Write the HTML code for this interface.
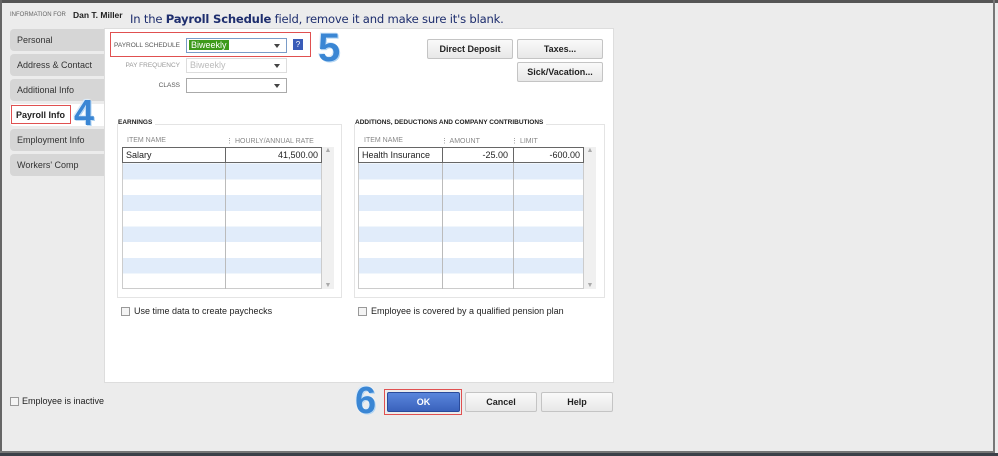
<!DOCTYPE html>
<html><head><style>
*{box-sizing:border-box;margin:0;padding:0}
body{width:998px;height:456px;background:#ececec;font-family:"Liberation Sans",Arial,sans-serif;font-size:9px;color:#222;position:relative;overflow:hidden}
.a{position:absolute;white-space:nowrap}
.tab{position:absolute;left:10px;width:94px;height:22px;background:#d6d6d6;border-radius:4px 0 0 4px;padding:6px 0 0 7px;font-size:9px;color:#333}
.btn{position:absolute;background:linear-gradient(#fafafa,#e8e8e8);border:1px solid #c4c4c4;border-radius:2px;text-align:center;font-size:9px;color:#222;line-height:18px}
.lbl{position:absolute;font-size:6.5px;color:#555;text-align:right;white-space:nowrap}
.sel{position:absolute;height:15px;border:1px solid #aaa;background:#fff}
.sel:after{content:"";position:absolute;right:6px;top:5px;border:3px solid transparent;border-top:4px solid #444}
.num{position:absolute;font-family:"Liberation Sans",sans-serif;font-weight:bold;color:#3a86d4;text-shadow:0 0 2px #fff,1px 1px 0 #9cc9f0,-1px -1px 0 #cde4f8}
.hd{position:absolute;font-size:7px;color:#888;white-space:nowrap}
.cb{position:absolute;width:9px;height:9px;border:1px solid #999;background:#f4f4f4}
</style></head><body>
<div class="a" style="left:0;top:0;width:998px;height:3px;background:#555"></div>
<div class="a" style="left:0;top:0;width:2px;height:456px;background:#666"></div>
<div class="a" style="left:993px;top:0;width:2px;height:452px;background:#777"></div>
<div class="a" style="left:0;top:451px;width:995px;height:2px;background:#777"></div>
<div class="a" style="left:0;top:453px;width:998px;height:3px;background:#3b4048"></div>

<div class="a" style="left:10px;top:12px;font-size:6px;color:#666">INFORMATION FOR</div>
<div class="a" style="left:73px;top:10px;font-size:8.5px;font-weight:bold">Dan T. Miller</div>
<div class="a" style="left:130px;top:12px;font-size:11.6px;color:#1e2e6e;font-family:'DejaVu Sans',sans-serif;letter-spacing:-0.2px">In the <b>Payroll Schedule</b> field, remove it and make sure it's blank.</div>

<div class="a" style="left:104px;top:28px;width:510px;height:355px;background:#fff;border:1px solid #ddd"></div>

<div class="tab" style="top:29px">Personal</div>
<div class="tab" style="top:54px">Address &amp; Contact</div>
<div class="tab" style="top:79px">Additional Info</div>
<div class="tab" style="top:104px;background:#fff"></div>
<div class="a" style="left:11px;top:105px;width:60px;height:19px;border:1px solid #e05050;padding:4px 0 0 4px;font-weight:bold;font-size:9px">Payroll Info</div>
<div class="num" style="left:74px;top:92px;font-size:36px">4</div>
<div class="tab" style="top:129px">Employment Info</div>
<div class="tab" style="top:154px">Workers' Comp</div>

<div class="a" style="left:110px;top:32px;width:201px;height:25px;border:1px solid #e05050"></div>
<div class="lbl" style="left:100px;top:42px;width:80px">PAYROLL SCHEDULE</div>
<div class="sel" style="left:186px;top:38px;width:101px;border-color:#7a9cc8"><span style="background:#3d9a1a;color:#fff;font-size:9px;padding:0 2px;position:absolute;left:2px;top:1px">Biweekly</span></div>
<div class="a" style="left:293px;top:39px;width:10px;height:11px;background:#3a5cb8;color:#fff;font-size:8px;text-align:center;line-height:11px">?</div>
<div class="num" style="left:318px;top:26px;font-size:40px">5</div>
<div class="lbl" style="left:100px;top:62px;width:80px;color:#999">PAY FREQUENCY</div>
<div class="sel" style="left:186px;top:58px;width:101px;border-color:#ddd;color:#bbb;padding:1px 3px;font-size:9px">Biweekly</div>
<div class="lbl" style="left:100px;top:82px;width:80px">CLASS</div>
<div class="sel" style="left:186px;top:78px;width:101px"></div>

<div class="btn" style="left:427px;top:39px;width:86px;height:20px;font-weight:bold">Direct Deposit</div>
<div class="btn" style="left:517px;top:39px;width:86px;height:20px;font-weight:bold">Taxes...</div>
<div class="btn" style="left:517px;top:62px;width:86px;height:20px;font-weight:bold">Sick/Vacation...</div>

<!-- earnings -->
<div class="a" style="left:117px;top:124px;width:225px;height:174px;border:1px solid #e4e4e4"></div>
<div class="a" style="left:118px;top:119px;background:#fff;font-size:6.5px;font-weight:bold;padding-right:3px">EARNINGS</div>
<div class="hd" style="left:127px;top:137px">ITEM NAME</div>
<div class="hd" style="left:226px;top:137px">⋮ HOURLY/ANNUAL RATE</div>
<div class="a" style="left:122px;top:147px;width:200px;height:142px;background:repeating-linear-gradient(#fff 0 15.7px,#e1ecfa 15.7px 31.4px);border:1px solid #ccc"></div>
<div class="a" style="left:225px;top:147px;width:1px;height:142px;background:#bbb"></div>
<div class="a" style="left:122px;top:147px;width:200px;height:16px;border:1px solid #666;background:#fff;font-size:9px;padding:2px 3px">Salary<span style="position:absolute;right:3px">41,500.00</span></div>
<div class="a" style="left:225px;top:147px;width:1px;height:16px;background:#666"></div>
<div class="a" style="left:322px;top:147px;width:12px;height:142px;background:#f0f0f0;color:#aaa;font-size:7px;text-align:center">▲<div style="position:absolute;bottom:0;width:12px">▼</div></div>

<!-- additions -->
<div class="a" style="left:354px;top:124px;width:251px;height:174px;border:1px solid #e4e4e4"></div>
<div class="a" style="left:355px;top:119px;background:#fff;font-size:6.5px;font-weight:bold;padding-right:3px">ADDITIONS, DEDUCTIONS AND COMPANY CONTRIBUTIONS</div>
<div class="hd" style="left:364px;top:137px">ITEM NAME</div>
<div class="hd" style="left:441px;top:137px">⋮ AMOUNT</div>
<div class="hd" style="left:511px;top:137px">⋮ LIMIT</div>
<div class="a" style="left:358px;top:147px;width:226px;height:142px;background:repeating-linear-gradient(#fff 0 15.7px,#e1ecfa 15.7px 31.4px);border:1px solid #ccc"></div>
<div class="a" style="left:442px;top:147px;width:1px;height:142px;background:#bbb"></div>
<div class="a" style="left:513px;top:147px;width:1px;height:142px;background:#bbb"></div>
<div class="a" style="left:358px;top:147px;width:226px;height:16px;border:1px solid #666;background:#fff;font-size:9px;padding:2px 3px">Health Insurance<span style="position:absolute;right:75px">-25.00</span><span style="position:absolute;right:3px">-600.00</span></div>
<div class="a" style="left:442px;top:147px;width:1px;height:16px;background:#666"></div>
<div class="a" style="left:513px;top:147px;width:1px;height:16px;background:#666"></div>
<div class="a" style="left:584px;top:147px;width:12px;height:142px;background:#f0f0f0;color:#aaa;font-size:7px;text-align:center">▲<div style="position:absolute;bottom:0;width:12px">▼</div></div>

<div class="cb" style="left:121px;top:307px"></div>
<div class="a" style="left:134px;top:306px;font-size:9px">Use time data to create paychecks</div>
<div class="cb" style="left:358px;top:307px"></div>
<div class="a" style="left:371px;top:306px;font-size:9px">Employee is covered by a qualified pension plan</div>

<div class="cb" style="left:10px;top:397px"></div>
<div class="a" style="left:22px;top:396px;font-size:9px">Employee is inactive</div>

<div class="num" style="left:355px;top:380px;font-size:38px">6</div>
<div class="a" style="left:384px;top:389px;width:78px;height:26px;border:1px solid #e05050"></div>
<div class="btn" style="left:387px;top:392px;width:73px;height:20px;background:linear-gradient(#5a86dc,#3a62bc);border-color:#2a4a9a;color:#fff;font-weight:bold">OK</div>
<div class="btn" style="left:465px;top:392px;width:72px;height:20px;font-weight:bold">Cancel</div>
<div class="btn" style="left:541px;top:392px;width:72px;height:20px;font-weight:bold">Help</div>
</body></html>
